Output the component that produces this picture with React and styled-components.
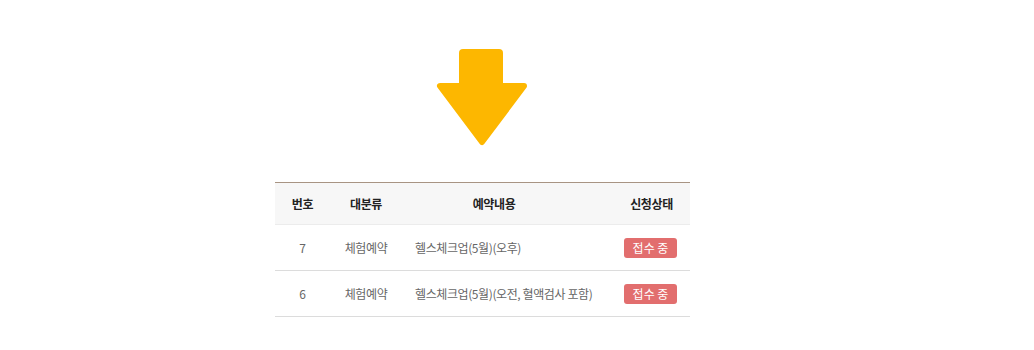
import React from "react";
import styled, { createGlobalStyle } from "styled-components";

const Global = createGlobalStyle`
  html, body { margin: 0; padding: 0; background: #fff; }
  body { font-family: "Noto Sans CJK KR", "Noto Sans", sans-serif; }
`;

const Page = styled.div`
  width: 1034px;
  height: 350px;
  padding-top: 48px;
  box-sizing: border-box;
`;

const Column = styled.div`
  width: 415px;
  margin-left: 275px;
  display: flex;
  flex-direction: column;
  align-items: center;
`;

const ArrowWrap = styled.div`
  width: 92px;
  height: 100px;
  margin-left: -2px;
  margin-bottom: 34px;
`;

const Table = styled.div`
  width: 100%;
  border-top: 1px solid #a89483;
`;

const Row = styled.div`
  display: grid;
  grid-template-columns: 55px 72px 211px 77px;
  align-items: center;
  height: ${(p) => (p.$head ? "41px" : "45px")};
  background: ${(p) => (p.$head ? "#f7f7f7" : "#fff")};
  border-bottom: 1px solid ${(p) => (p.$head ? "#ececec" : "#dcdcdc")};
`;

const Cell = styled.div`
  font-size: 12px;
  letter-spacing: -0.4px;
  font-weight: ${(p) => (p.$head ? 700 : 400)};
  color: ${(p) => (p.$head ? "#222" : "#666")};
  text-align: ${(p) => p.$align || "center"};
  padding-left: ${(p) => p.$pl || "0px"};
  padding-right: ${(p) => p.$pr || "0px"};
  white-space: nowrap;
`;

const Badge = styled.span`
  display: inline-flex;
  align-items: center;
  justify-content: center;
  width: 53px;
  height: 20px;
  margin-right: 2px;
  border-radius: 3px;
  background: #e26e6e;
  color: #fff;
  font-size: 12px;
  letter-spacing: 0px;
`;

const DownArrow = () => (
  <svg width="92" height="100" viewBox="0 0 92 100">
    <rect x="23" y="1" width="44" height="45" rx="4" fill="#fdb700" />
    <polygon
      points="4,38 88,38 46,94"
      fill="#fdb700"
      stroke="#fdb700"
      strokeWidth="6"
      strokeLinejoin="round"
    />
  </svg>
);

const rows = [
  { no: 7, cat: "체험예약", content: "헬스체크업(5월)(오후)" },
  { no: 6, cat: "체험예약", content: "헬스체크업(5월)(오전, 혈액검사 포함)" },
];

export default function App() {
  return (
    <Page>
      <Global />
      <Column>
        <ArrowWrap>
          <DownArrow />
        </ArrowWrap>
        <Table>
          <Row $head>
            <Cell $head>번호</Cell>
            <Cell $head>대분류</Cell>
            <Cell $head $pr="27px">예약내용</Cell>
            <Cell $head>신청상태</Cell>
          </Row>
          {rows.map((r) => (
            <Row key={r.no}>
              <Cell>{r.no}</Cell>
              <Cell>{r.cat}</Cell>
              <Cell $align="left" $pl="13px">{r.content}</Cell>
              <Cell>
                <Badge>접수 중</Badge>
              </Cell>
            </Row>
          ))}
        </Table>
      </Column>
    </Page>
  );
}
